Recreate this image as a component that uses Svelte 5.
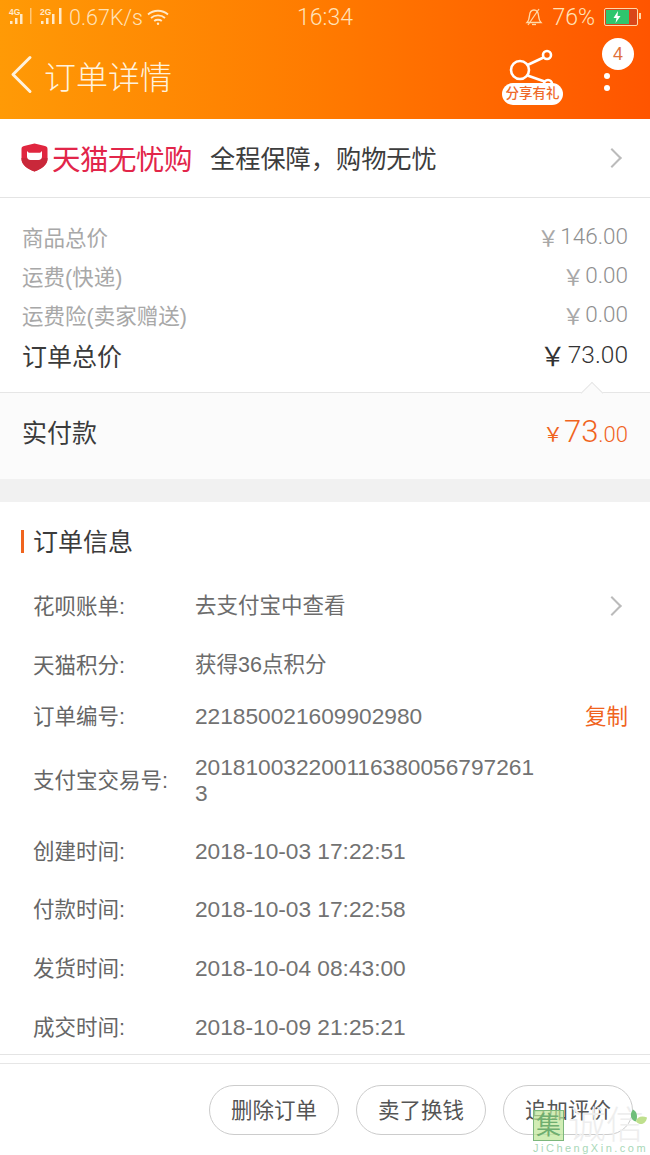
<script>
  const fees = [
    { label: '商品总价', value: '146.00' },
    { label: '运费(快递)', value: '0.00' },
    { label: '运费险(卖家赠送)', value: '0.00' }
  ]

  // gap is the space above a row, rows grow only when the value wraps
  const info = [
    { label: '花呗账单:', value: '去支付宝中查看', gap: 5, arrow: true, cn: true },
    { label: '天猫积分:', value: '获得36点积分', gap: 19, cn: true },
    { label: '订单编号:', value: '221850021609902980', gap: 11, copy: true },
    { label: '支付宝交易号:', value: '2018100322001163800567972613', gap: 18 },
    { label: '创建时间:', value: '2018-10-03 17:22:51', gap: 25 },
    { label: '付款时间:', value: '2018-10-03 17:22:58', gap: 18 },
    { label: '发货时间:', value: '2018-10-04 08:43:00', gap: 19 },
    { label: '成交时间:', value: '2018-10-09 21:25:21', gap: 19 }
  ]

  const actions = ['删除订单', '卖了换钱', '追加评价']
</script>

<div class="page">
  <header class="top">
    <div class="status">
      <div class="status-left">
        <svg width="58" height="18" viewBox="0 0 58 18">
          <g fill="#ffe9c8">
            <rect x="2" y="13" width="2.500" height="3" />
            <rect x="7" y="10" width="2.500" height="6" />
            <rect x="12" y="6" width="2.500" height="10" />
            <rect x="22" y="0" width="1.500" height="16" opacity=".6" />
            <rect x="33" y="13" width="2.500" height="3" />
            <rect x="38" y="10" width="2.500" height="6" />
            <rect x="44" y="6" width="2.500" height="10" />
            <rect x="51" y="0" width="2.500" height="16" />
          </g>
          <text x="1" y="6.500" class="tiny">4G</text>
          <text x="32" y="6.500" class="tiny">2G</text>
        </svg>
        <span class="speed">0.67K/s</span>
        <svg width="24" height="18" viewBox="0 0 24 18" fill="none" stroke="#ffe9c8" stroke-width="1.800">
          <path d="M2 6.500c5.500-5 14.500-5 20 0" />
          <path d="M5 10c3.800-3.400 10.200-3.400 14 0" />
          <path d="M8.200 13c2-1.700 5.600-1.700 7.600 0" />
          <circle cx="12" cy="15.800" r="1.200" fill="#ffe9c8" stroke="none" />
        </svg>
      </div>
      <span class="clock">16:34</span>
      <div class="status-right">
        <svg width="18" height="20" viewBox="0 0 18 20" fill="none" stroke="#ffd9a8" stroke-width="1.300">
          <path d="M2 15.500c2-2 2.200-4 2.500-7C4.800 5 6.500 3 9 3s4.200 2 4.500 5.500c.3 3 .5 5 2.500 7z" />
          <path d="M7 17.500h4" />
          <path d="M3 18 14 2" />
        </svg>
        <span class="pct">76%</span>
        <div class="battery">
          <div class="charge">
            <svg width="10" height="12" viewBox="0 0 10 12"><path d="M6 0 1.500 7h3L3.500 12 8.500 5h-3z" fill="#fff" /></svg>
          </div>
        </div>
      </div>
    </div>

    <div class="nav">
      <div class="nav-left">
        <svg width="26" height="40" viewBox="0 0 26 40" fill="none" stroke="#fff2dd" stroke-width="3" stroke-linecap="round" stroke-linejoin="round">
          <path d="M22 2.500 5 19.500l17 17" />
        </svg>
        <span class="title">订单详情</span>
      </div>
      <div class="nav-right">
        <div class="share">
          <svg width="56" height="44" viewBox="0 0 56 44" fill="none" stroke="#fff" stroke-width="2.600">
            <circle cx="15" cy="22" r="9" />
            <circle cx="42" cy="7" r="4" />
            <circle cx="43" cy="36" r="4" />
            <path d="M22.500 17 38.500 9.500M22.500 27.500 39.500 33.500" />
          </svg>
          <span class="gift">分享有礼</span>
        </div>
        <div class="more">
          <span class="badge">4</span>
          <i class="dot"></i>
          <i class="dot"></i>
        </div>
      </div>
    </div>
  </header>

  <section class="promise">
    <svg class="shield" width="27" height="29" viewBox="0 0 27 29">
      <path d="M13.500 0.500 24 3c1.700.4 2.500 1.300 2.500 3v10c0 5.500-6 10-13 12.500C6.500 26 0.500 21.500 0.500 16V6C.5 4.300 1.300 3.400 3 3z" fill="#e0263f" />
      <path d="M0.500 15h26v1c0 5.500-6 10-13 12.500C6.500 26 0.500 21.500 0.500 16z" fill="#c9283a" />
      <path d="M6 8c1 1.300 2 1.800 3 1.800h9c1 0 2-.5 3-1.800v5.500c0 2-1.500 3.500-3.500 3.500h-8C7.500 17 6 15.500 6 13.500z" fill="#fff" />
    </svg>
    <span class="brand">天猫无忧购</span>
    <span class="slogan">全程保障，购物无忧</span>
    <span class="chevron big"></span>
  </section>

  <section class="fees">
    {#each fees as fee}
      <div class="fee">
        <span>{fee.label}</span>
        <span class="amount"><small>￥</small>{fee.value}</span>
      </div>
    {/each}
    <div class="fee total">
      <span>订单总价</span>
      <span class="amount"><small>￥</small>73.00</span>
    </div>
  </section>

  <section class="paid">
    <i class="notch"></i>
    <span>实付款</span>
    <span class="paid-amount"><small>￥</small><b>73</b><em>.00</em></span>
  </section>

  <section class="info">
    <h2>订单信息</h2>
    {#each info as row}
      <div class="row" style="margin-top: {row.gap}px">
        <span class="key">{row.label}</span>
        <span class="val" class:cn={row.cn}>{row.value}</span>
        {#if row.arrow}<span class="chevron"></span>{/if}
        {#if row.copy}<span class="copy">复制</span>{/if}
      </div>
    {/each}
  </section>

  <footer class="bar">
    {#each actions as action}
      <button>{action}</button>
    {/each}
  </footer>

  <div class="stamp">
    <div class="stamp-top">
      <span class="stamp-box">集</span>
      <span class="stamp-name">诚信</span>
      <svg class="leaf" width="20" height="27" viewBox="0 0 20 22">
        <path d="M5 1c4 2 5 7 3 12C3 12 1 6 5 1z" fill="#6fbf7a" />
        <path d="M8 13c1-5 6-6 11-4-1 6-6 9-11 4z" fill="#bfe08e" />
      </svg>
    </div>
    <span class="stamp-url">JiChengXin.com</span>
  </div>
</div>

<style>
  :global(body) {
    margin: 0;
    background: #fff;
  }

  .page {
    position: relative;
    width: 650px;
    height: 1155px;
    overflow: hidden;
    background: #fff;
    font-family: "Liberation Sans", "Noto Sans CJK SC", sans-serif;
    color: #333;
  }

  .top {
    height: 119px;
    background: linear-gradient(90deg, #ff9a06 0%, #ff7a00 50%, #ff5500 100%);
    color: #ffe2b8;
  }

  .status {
    display: grid;
    grid-template-columns: 1fr auto 1fr;
    align-items: center;
    height: 34px;
    padding: 0 8px;
  }

  .status-left,
  .status-right {
    display: flex;
    align-items: center;
  }

  .tiny {
    font-size: 8.500px;
    font-weight: 700;
    fill: #ffe9c8;
  }

  .speed {
    font-size: 21.500px;
    margin: 0 3px;
    font-family: "Roboto", sans-serif;
    font-weight: 300;
  }

  .clock {
    font-size: 23px;
    font-family: "Roboto", sans-serif;
    font-weight: 300;
  }

  .status-right {
    justify-content: flex-end;
    gap: 9px;
    padding-right: 4px;
  }

  .pct {
    font-size: 23px;
    font-family: "Roboto", sans-serif;
    font-weight: 300;
  }

  .battery {
    position: relative;
    width: 30px;
    height: 14px;
    border: 1px solid #ffd9a8;
    border-radius: 2px;
    padding: 1px;
    background: #d9471a;
  }

  .battery::after {
    content: '';
    position: absolute;
    right: -4px;
    top: 4px;
    width: 2px;
    height: 6px;
    background: #ffd9a8;
  }

  .charge {
    width: 76%;
    height: 100%;
    background: #2fc66d;
    display: flex;
    align-items: center;
    justify-content: center;
  }

  .nav {
    display: flex;
    justify-content: space-between;
    align-items: flex-start;
    height: 85px;
    padding-left: 8px;
    padding-right: 16px;
  }

  .nav-left {
    display: flex;
    align-items: center;
    gap: 10px;
    height: 81px;
  }

  .title {
    font-size: 32px;
    color: #fff2dd;
    font-weight: 300;
    white-space: nowrap;
  }

  .nav-right {
    display: flex;
    gap: 37px;
  }

  .share {
    position: relative;
    width: 62px;
    height: 71px;
    display: flex;
    justify-content: center;
    padding-top: 14px;
    box-sizing: border-box;
  }

  .gift {
    position: absolute;
    left: 0;
    bottom: 0;
    width: 61px;
    height: 22px;
    line-height: 21px;
    border-radius: 11px;
    background: #fff;
    color: #ee6a2a;
    font-size: 13.500px;
    font-weight: 500;
    text-align: center;
    white-space: nowrap;
  }

  .more {
    display: flex;
    flex-direction: column;
    align-items: flex-start;
    width: 33px;
    padding-top: 4px;
  }

  .badge {
    width: 32px;
    height: 32px;
    line-height: 32px;
    border-radius: 50%;
    background: #fff;
    color: #e0703a;
    font-size: 18px;
    text-align: center;
    margin: 0 0 -3px 1px;
  }

  .dot {
    width: 6px;
    height: 6px;
    border-radius: 50%;
    background: #fff;
    margin: 6px 0 0 3px;
  }

  .promise {
    display: flex;
    align-items: center;
    height: 76px;
    padding: 0 0 2px 21px;
    border-bottom: 1px solid #e4e4e4;
    position: relative;
  }

  .shield {
    flex: none;
    margin-right: 4px;
  }

  .brand {
    font-size: 28.500px;
    color: #e2264a;
    letter-spacing: -0.500px;
    width: 141px;
    white-space: nowrap;
  }

  .slogan {
    font-size: 25.200px;
    margin-left: 17px;
    color: #3d3d3d;
    white-space: nowrap;
  }

  .chevron {
    position: absolute;
    right: 31px;
    width: 14px;
    height: 14px;
    box-sizing: border-box;
    border-top: 2px solid #bbb;
    border-right: 2px solid #bbb;
    transform: rotate(45deg);
  }

  .chevron.big {
    top: 32px;
  }

  .fees {
    padding: 19px 22px 0;
  }

  .fee {
    display: flex;
    justify-content: space-between;
    align-items: center;
    height: 39px;
    font-size: 21.500px;
    color: #a8a8a8;
  }

  .amount {
    display: flex;
    align-items: center;
    padding-bottom: 2px;
    font-family: "Roboto", sans-serif;
    font-weight: 300;
    font-size: 22.500px;
    color: #8f8f8f;
  }

  .amount small {
    font-size: 22px;
    margin-right: 1px;
    font-family: "Noto Sans CJK SC", sans-serif;
    font-weight: 400;
    color: #a8a8a8;
  }

  .fee.total {
    height: 42px;
    font-size: 25px;
    color: #3b3b3b;
  }

  .fee.total .amount {
    font-size: 24.500px;
    color: #333;
  }

  .fee.total small {
    font-size: 26px;
    margin-right: 2px;
    color: #333;
  }

  .paid {
    position: relative;
    display: flex;
    justify-content: space-between;
    align-items: center;
    height: 76px;
    padding: 0 22px 10px;
    margin-top: 16px;
    background: #fbfbfb;
    border-top: 1px solid #e6e6e6;
    border-bottom: 23px solid #f1f1f1;
    font-size: 25px;
    color: #3b3b3b;
  }

  .notch {
    position: absolute;
    right: 50px;
    top: -8px;
    width: 15px;
    height: 15px;
    background: #fbfbfb;
    border-top: 1px solid #e6e6e6;
    border-left: 1px solid #e6e6e6;
    transform: rotate(45deg);
  }

  .paid-amount {
    display: flex;
    align-items: baseline;
    color: #f0641e;
    font-family: "Roboto", sans-serif;
    font-weight: 300;
    font-size: 22px;
  }

  .paid-amount small {
    font-size: 20px;
    margin-right: 1px;
    font-family: "Noto Sans CJK SC", sans-serif;
    font-weight: 400;
  }

  .paid-amount b {
    font-weight: 300;
    font-size: 31px;
  }

  .paid-amount em {
    font-style: normal;
  }

  h2 {
    margin: 0;
    font-size: 25px;
    font-weight: 400;
    color: #3b3b3b;
    height: 79px;
    line-height: 81px;
    padding-left: 33px;
    position: relative;
  }

  h2::before {
    content: '';
    position: absolute;
    left: 21px;
    top: 28px;
    width: 3px;
    height: 23px;
    background: #f0641e;
  }

  .info {
    border-bottom: 1px solid #e4e4e4;
    height: 553px;
    box-sizing: border-box;
    overflow: hidden;
  }

  .row {
    position: relative;
    display: flex;
    align-items: center;
    min-height: 40px;
    padding-left: 33px;
    font-size: 21.500px;
    color: #666;
  }

  .key {
    width: 162px;
    flex: none;
    padding-bottom: 4px;
  }

  .val {
    width: 345px;
    word-break: break-all;
    line-height: 26px;
    font-size: 22.700px;
    color: #727272;
  }

  .val.cn {
    font-size: 21.500px;
    color: #6c6c6c;
  }

  .copy {
    position: absolute;
    right: 22px;
    padding-bottom: 4px;
    color: #f0641e;
  }

  .bar {
    margin-top: 8px;
    border-top: 1px solid #e6e6e6;
    height: 90px;
    display: flex;
    justify-content: flex-end;
    align-items: flex-start;
    gap: 17px;
    padding: 21px 17px 0 0;
  }

  button {
    width: 130px;
    height: 50px;
    border: 1px solid #ccc;
    border-radius: 25px;
    background: #fff;
    color: #555;
    font: inherit;
    font-size: 21.500px;
    padding: 0 0 3px;
  }

  .stamp {
    position: absolute;
    left: 533px;
    bottom: 0;
    width: 117px;
    display: flex;
    flex-direction: column;
  }

  .stamp-top {
    position: relative;
    display: flex;
    align-items: center;
    gap: 4px;
  }

  .stamp-box {
    width: 31px;
    height: 31px;
    line-height: 28px;
    box-sizing: border-box;
    text-align: center;
    background: rgba(190, 230, 150, .7);
    border: 1px solid #7cb77c;
    color: #6fae70;
    font-size: 25px;
  }

  .stamp-name {
    font-size: 38px;
    line-height: 32px;
    font-weight: 300;
    color: #eeeeee;
    white-space: nowrap;
  }

  .leaf {
    position: absolute;
    left: 95px;
    top: -3px;
  }

  .stamp-url {
    font-size: 11px;
    line-height: 14px;
    letter-spacing: 2.500px;
    color: #a9d8b8;
    white-space: nowrap;
  }
</style>
